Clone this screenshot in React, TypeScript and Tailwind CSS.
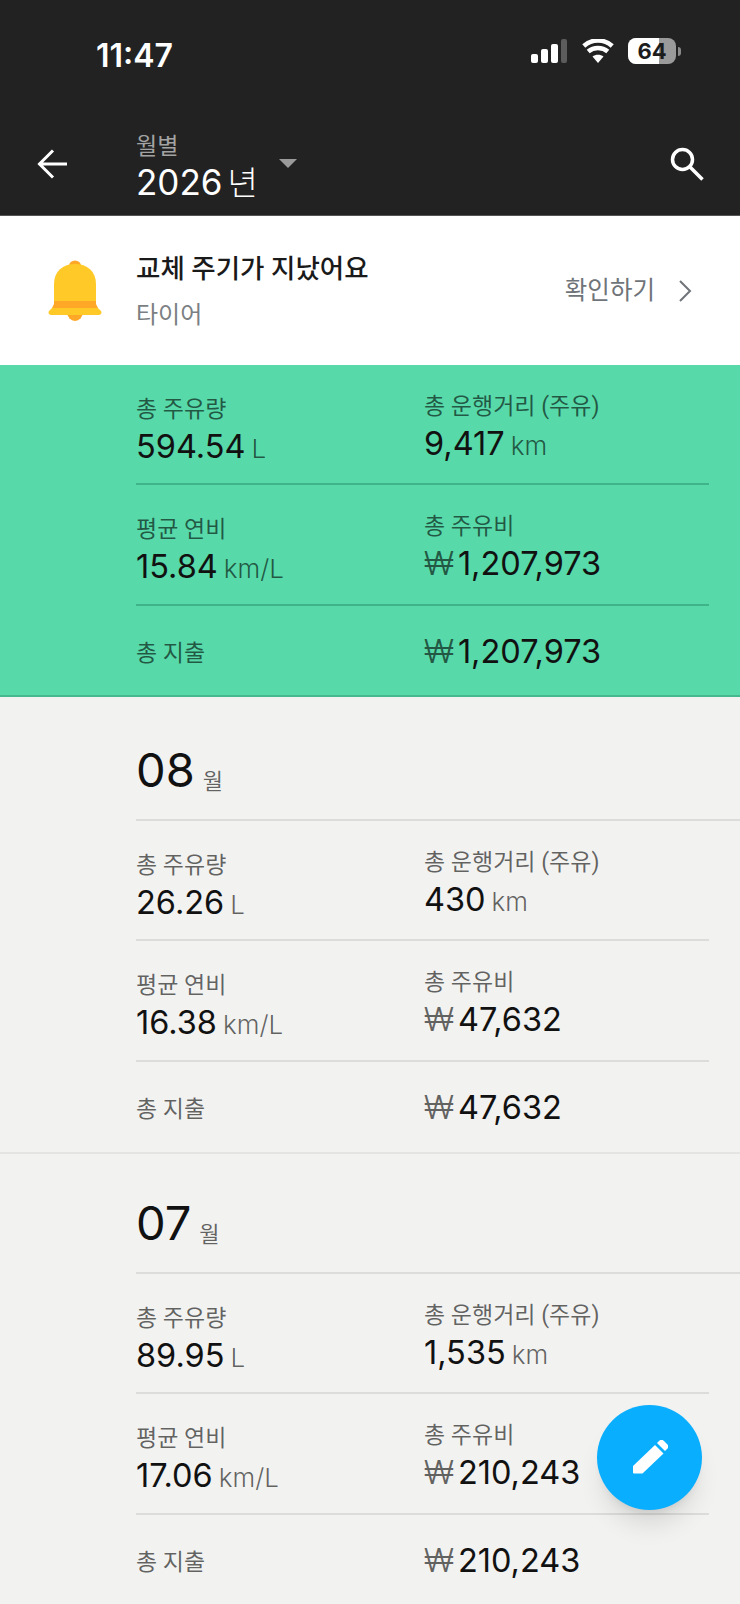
import React from "react";

const krFont = "[font-family:Roboto,'Noto_Sans_CJK_KR',sans-serif]";
const numFont = "[font-family:Inter,'Noto_Sans_CJK_KR',sans-serif]";

function Amount({ value, unit, won }: { value: string; unit?: string; won?: boolean }) {
  return (
    <div className={`flex items-baseline h-[42px] text-[32.5px] leading-[42px] text-[#111] ${numFont}`}>
      {won && <span className="mr-[4px] font-light text-black/60">₩</span>}
      <span>{value}</span>
      {unit && <span className="ml-[6px] text-[26px] font-light text-black/60">{unit}</span>}
    </div>
  );
}

function Stat({
  label,
  value,
  unit,
  won,
  top,
}: {
  label: string;
  value: string;
  unit?: string;
  won?: boolean;
  top: string;
}) {
  return (
    <div className={`flex flex-col ${top}`}>
      <div className="text-[23px] leading-[32px] text-black/60">{label}</div>
      <Amount value={value} unit={unit} won={won} />
    </div>
  );
}

function StatBlock({
  fuel,
  dist,
  eff,
  cost,
  lineColor,
}: {
  fuel: string;
  dist: string;
  eff: string;
  cost: string;
  lineColor: string;
}) {
  return (
    <div className="pl-[136px] pr-[31px]">
      <div className={`grid grid-cols-[288px_1fr] h-[120px] border-b-2 ${lineColor}`}>
        <Stat top="pt-[29px]" label="총 주유량" value={fuel} unit="L" />
        <Stat top="pt-[26px]" label="총 운행거리 (주유)" value={dist} unit="km" />
      </div>
      <div className={`grid grid-cols-[288px_1fr] h-[121px] border-b-2 ${lineColor}`}>
        <Stat top="pt-[29px]" label="평균 연비" value={eff} unit="km/L" />
        <Stat top="pt-[26px]" label="총 주유비" value={cost} won />
      </div>
      <div className="grid grid-cols-[288px_1fr] h-[90px]">
        <div className="pt-[32px] text-[23px] leading-[32px] text-black/60">총 지출</div>
        <div className="pt-[25px]">
          <Amount value={cost} won />
        </div>
      </div>
    </div>
  );
}

function MonthSection({
  month,
  head,
  fuel,
  dist,
  eff,
  cost,
}: {
  month: string;
  head: string;
  fuel: string;
  dist: string;
  eff: string;
  cost: string;
}) {
  return (
    <section className="border-b-2 border-[#e4e4e2]">
      <div className={`ml-[136px] ${head} border-b-2 border-[#dcdcda] flex items-end pb-[21px]`}>
        <span className={`text-[47px] leading-[56px] text-[#111] ${numFont}`}>{month}</span>
        <span className="ml-[8px] text-[22px] leading-[32px] text-black/60">월</span>
      </div>
      <StatBlock fuel={fuel} dist={dist} eff={eff} cost={cost} lineColor="border-[#dcdcda]" />
    </section>
  );
}

function StatusBar() {
  return (
    <div className="h-[112px] flex items-start justify-between pt-[36px] pl-[96px] pr-[59px]">
      <span className="text-[32px] leading-[39px] font-semibold text-white [font-family:Inter,sans-serif]">11:47</span>
      <div className="flex items-center gap-[14px] pt-[2px]">
        <svg width="37" height="24" viewBox="0 0 37 24">
          <rect x="0" y="15" width="7" height="9" rx="2" fill="#fff" />
          <rect x="10" y="10" width="7" height="14" rx="2" fill="#fff" />
          <rect x="20" y="5" width="7" height="19" rx="2" fill="#fff" />
          <rect x="30" y="0" width="6" height="24" rx="2" fill="#5c5c5c" />
        </svg>
        <svg width="32" height="24" viewBox="0 0 32 24">
          <path d="M16 24l-5.500-6.500c3-2.400 8-2.400 11 0z" fill="#fff" />
          <path d="M6.200 12.500c5.500-4.800 14-4.800 19.600 0" fill="none" stroke="#fff" strokeWidth="4.500" />
          <path d="M1.800 7c8-7.400 20.400-7.400 28.400 0" fill="none" stroke="#fff" strokeWidth="4.500" />
        </svg>
        <div className="flex items-center gap-[2px]">
          <div className="relative w-[48px] h-[26px] rounded-[8px] overflow-hidden bg-[#9a9a9a] flex">
            <div className="w-[64%] bg-white" />
            <span className="absolute inset-0 flex items-center justify-center text-[22px] font-bold text-[#1c1c1c] [font-family:Inter,sans-serif]">
              64
            </span>
          </div>
          <div className="w-[3px] h-[9px] rounded-r-[3px] bg-[#8a8a8a]" />
        </div>
      </div>
    </div>
  );
}

function NavBar() {
  return (
    <div className="relative h-[104px] flex items-start pl-[37px] pr-[36px]">
      <svg className="mt-[37px]" width="30" height="30" viewBox="0 0 30 30" fill="none" stroke="#fff" strokeWidth="3">
        <path d="M30 15H3M16 1.500L2.500 15 16 28.500" />
      </svg>
      <div className="ml-[69px] mt-[20px] flex flex-col">
        <span className="text-[23px] leading-[29px] text-[#a3a3a3]">월별</span>
        <span className={`flex items-baseline text-white text-[35px] leading-[42px] ${numFont}`}>
          2026
          <span className="ml-[5px] text-[33px] font-light">년</span>
        </span>
      </div>
      <div className="ml-[21px] mt-[47px] w-0 h-0 border-l-[9px] border-r-[9px] border-t-[9px] border-l-transparent border-r-transparent border-t-[#9a9a9a]" />
      <svg className="ml-auto mt-[35px]" width="34" height="34" viewBox="0 0 34 34" fill="none" stroke="#fff" strokeWidth="3.500">
        <circle cx="12.500" cy="12.500" r="10" />
        <path d="M20 20l12.500 12.500" />
      </svg>
    </div>
  );
}

function Bell() {
  return (
    <svg width="54" height="62" viewBox="0 0 54 62">
      <ellipse cx="27" cy="6" rx="6" ry="5.500" fill="#ffa726" />
      <path d="M19 52h16a8 9 0 0 1-16 0z" fill="#ffa726" />
      <path d="M6 42V24C6 11 15 4 27 4s21 7 21 20v18z" fill="#ffca28" />
      <path d="M6 41h42v3l2 4H4l2-4z" fill="#ffa726" />
      <path d="M4 48h46l3 3a2.500 2.500 0 0 1-2 4H3a2.500 2.500 0 0 1-2-4z" fill="#ffca28" />
    </svg>
  );
}

export default function App() {
  return (
    <div className={`relative w-[740px] h-[1604px] overflow-hidden bg-[#f2f2f1] ${krFont}`}>
      <header className="bg-[#222222] h-[216px] border-b border-[#555]">
        <StatusBar />
        <NavBar />
      </header>

      <div className="bg-white h-[149px] flex items-center pl-[48px] pr-[48px]">
        <Bell />
        <div className="ml-[34px] flex flex-col">
          <span className="text-[26.500px] leading-[38px] font-medium text-[#1a1a1a]">교체 주기가 지났어요</span>
          <span className="mt-[10px] text-[24px] leading-[34px] text-[#7b7f83]">타이어</span>
        </div>
        <span className="ml-auto pt-[2px] text-[24.500px] text-[#6f7479]">확인하기</span>
        <svg className="ml-[23px]" width="14" height="24" viewBox="0 0 14 24" fill="none" stroke="#6f7479" strokeWidth="2">
          <path d="M2 2l10 10L2 22" />
        </svg>
      </div>

      <div className="bg-[#57d9a9] h-[332px] border-b-2 border-[#45b88f]">
        <StatBlock fuel="594.54" dist="9,417" eff="15.84" cost="1,207,973" lineColor="border-[#3fb48a]" />
      </div>

      <MonthSection month="08" head="h-[124px]" fuel="26.26" dist="430" eff="16.38" cost="47,632" />
      <MonthSection month="07" head="h-[120px]" fuel="89.95" dist="1,535" eff="17.06" cost="210,243" />

      <button className="absolute left-[597px] top-[1405px] w-[105px] h-[105px] rounded-full bg-[#0aaeff] shadow-xl flex items-center justify-center">
        <svg width="36" height="36" viewBox="0 0 36 36">
          <path d="M1 26L23 5l8.500 8.500-21 20H2a1 1 0 0 1-1-1z" fill="#fff" />
          <path d="M25 3l2-2a3.500 3.500 0 0 1 5 0l3 3a3.500 3.500 0 0 1 0 5l-2 2z" fill="#fff" />
        </svg>
      </button>
    </div>
  );
}
